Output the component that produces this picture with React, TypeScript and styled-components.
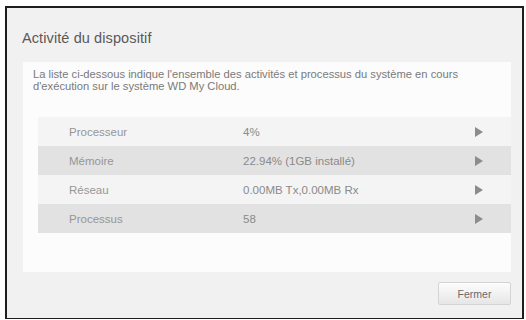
import React from "react";
import styled, { createGlobalStyle } from "styled-components";

const Global = createGlobalStyle`
  html, body { margin: 0; padding: 0; background: #ffffff; }
  body { font-family: "Liberation Sans", Arial, sans-serif; }
  #root { width: 526px; height: 320px; }
`;

const Page = styled.div`
  width: 526px;
  height: 320px;
  padding: 6px 2px 1px 5px;
  box-sizing: border-box;
  display: flex;
`;

const Dialog = styled.div`
  flex: 1;
  display: flex;
  flex-direction: column;
  background: #f1f1f1;
  border: 2px solid #1e1e1e;
  border-bottom-width: 1px;
`;

const Title = styled.h1`
  margin: 0;
  padding: 22px 0 0 15px;
  height: 32px;
  font-size: 14.5px;
  font-weight: normal;
  color: #595959;
  letter-spacing: 0.1px;
`;

const Panel = styled.div`
  margin: 0 11px 0 16px;
  height: 210px;
  background: #fcfcfc;
  display: flex;
  flex-direction: column;
`;

const Description = styled.p`
  margin: 0;
  padding: 6px 0 0 10px;
  font-size: 11.2px;
  line-height: 12px;
  color: #7a7a7a;
`;

const Table = styled.div`
  margin: 25px 0 0 15px;
  display: flex;
  flex-direction: column;
`;

const Row = styled.div<{ $shade: boolean }>`
  height: 29px;
  display: grid;
  grid-template-columns: 205px 1fr 36px;
  align-items: center;
  background: ${(p) => (p.$shade ? "#e2e2e2" : "#f4f4f4")};
  font-size: 11.5px;
  color: #969696;
`;

const Label = styled.span`
  padding-left: 31px;
`;

const Value = styled.span`
  color: #8a8a8a;
`;

const Arrow = styled.span`
  width: 0;
  height: 0;
  border-top: 5px solid transparent;
  border-bottom: 5px solid transparent;
  border-left: 8px solid #8c8c8c;
`;

const Footer = styled.div`
  flex: 1;
  display: flex;
  justify-content: flex-end;
  align-items: flex-start;
  padding: 10px 11px 0 0;
`;

const Button = styled.button`
  width: 73px;
  height: 23px;
  border: 1px solid #d4d4d4;
  border-radius: 2px;
  background: linear-gradient(#fdfdfd, #e6e6e6);
  font-family: "Liberation Sans", Arial, sans-serif;
  font-size: 10.5px;
  color: #6a6a6a;
  padding: 0;
`;

const rows = [
  { label: "Processeur", value: "4%" },
  { label: "Mémoire", value: "22.94% (1GB installé)" },
  { label: "Réseau", value: "0.00MB Tx,0.00MB Rx" },
  { label: "Processus", value: "58" },
];

export default function App() {
  return (
    <>
      <Global />
      <Page>
        <Dialog>
          <Title>Activité du dispositif</Title>
          <Panel>
            <Description>
              La liste ci-dessous indique l'ensemble des activités et processus du système en cours
              <br />
              d'exécution sur le système WD My Cloud.
            </Description>
            <Table>
              {rows.map((r, i) => (
                <Row key={r.label} $shade={i % 2 === 1}>
                  <Label>{r.label}</Label>
                  <Value>{r.value}</Value>
                  <Arrow />
                </Row>
              ))}
            </Table>
          </Panel>
          <Footer>
            <Button>Fermer</Button>
          </Footer>
        </Dialog>
      </Page>
    </>
  );
}
